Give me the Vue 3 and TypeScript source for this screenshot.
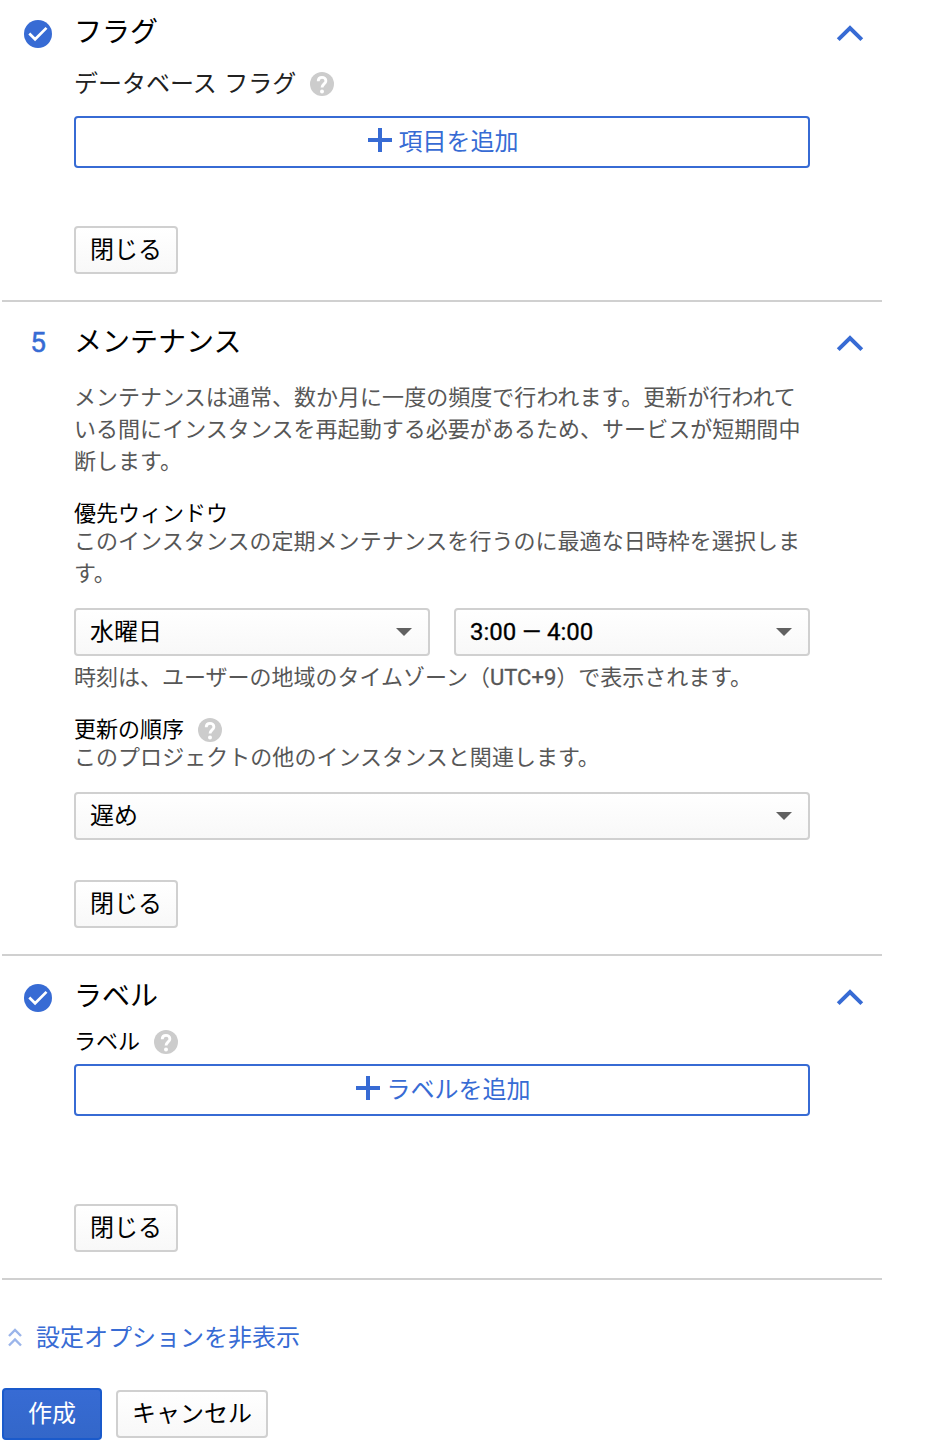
<script setup lang="ts">
import { ref } from 'vue'

const day = ref<string>('水曜日')
const time = ref<string>('3:00 — 4:00')
const order = ref<string>('遅め')
</script>

<template>
  <svg class="defs" aria-hidden="true">
    <symbol id="check" viewBox="0 0 28 28">
      <circle cx="14" cy="14" r="14" fill="#376bd4" />
      <path d="M5.3 13.5 11.1 19.3 22.5 7.9" fill="none" stroke="#fff" stroke-width="2.7" />
    </symbol>
    <symbol id="chevron" viewBox="0 0 28 18">
      <path d="M2.2 14.6 14 3 25.8 14.6" fill="none" stroke="#376bd4" stroke-width="4" />
    </symbol>
    <symbol id="help" viewBox="0 0 24 24">
      <circle cx="12" cy="12" r="12" fill="#ccc" />
      <path
        d="M8.2 9.3C8.2 6.8 9.8 5.4 12 5.4s3.9 1.4 3.9 3.5c0 2.8-3.9 3.2-3.9 6.6"
        fill="none"
        stroke="#fff"
        stroke-width="2.8"
      />
      <circle cx="12" cy="19.4" r="2" fill="#fff" />
    </symbol>
    <symbol id="plus" viewBox="0 0 24 24">
      <path d="M10 0h4v10h10v4H14v10h-4V14H0v-4h10z" fill="#376bd4" />
    </symbol>
  </svg>

  <main class="form">
    <section class="section first">
      <header class="head">
        <span class="step"><svg class="check"><use href="#check" /></svg></span>
        <h2 class="title">フラグ</h2>
        <svg class="chevron"><use href="#chevron" /></svg>
      </header>
      <div class="body">
        <div class="label-row flags-label">
          <span>データベース フラグ</span>
          <svg class="help"><use href="#help" /></svg>
        </div>
        <button class="add add-flag">
          <svg class="plus"><use href="#plus" /></svg><span>項目を追加</span>
        </button>
        <button class="btn close-flags"><span>閉じる</span></button>
      </div>
    </section>

    <section class="section">
      <header class="head">
        <span class="step number">5</span>
        <h2 class="title">メンテナンス</h2>
        <svg class="chevron"><use href="#chevron" /></svg>
      </header>
      <div class="body">
        <p class="text intro">メンテナンスは通常、数か月に一度の頻度で行われます。更新が行われて<br />いる間にインスタンスを再起動する必要があるため、サービスが短期間中<br />断します。</p>
        <h3 class="sub">優先ウィンドウ</h3>
        <p class="text">このインスタンスの定期メンテナンスを行うのに最適な日時枠を選択しま<br />す。</p>
        <div class="selects">
          <div class="select"><span>{{ day }}</span><i class="caret"></i></div>
          <div class="select"><span class="time">{{ time }}</span><i class="caret"></i></div>
        </div>
        <p class="text note">時刻は、ユーザーの地域のタイムゾーン（<span class="latin">UTC+9</span>）で表示されます。</p>
        <h3 class="sub">更新の順序<svg class="help"><use href="#help" /></svg></h3>
        <p class="text">このプロジェクトの他のインスタンスと関連します。</p>
        <div class="selects">
          <div class="select"><span>{{ order }}</span><i class="caret"></i></div>
        </div>
        <button class="btn close-maintenance"><span>閉じる</span></button>
      </div>
    </section>

    <section class="section">
      <header class="head">
        <span class="step"><svg class="check"><use href="#check" /></svg></span>
        <h2 class="title">ラベル</h2>
        <svg class="chevron"><use href="#chevron" /></svg>
      </header>
      <div class="body">
        <div class="label-row labels-label">
          <span>ラベル</span>
          <svg class="help"><use href="#help" /></svg>
        </div>
        <button class="add add-label">
          <svg class="plus"><use href="#plus" /></svg><span>ラベルを追加</span>
        </button>
        <button class="btn close-labels"><span>閉じる</span></button>
      </div>
    </section>

    <a class="toggle">
      <svg class="double" viewBox="0 0 14 20">
        <path d="M1 9 7 3l6 6M1 18.5l6-6 6 6" fill="none" stroke="#9bb5ea" stroke-width="2.4" />
      </svg>
      <span>設定オプションを非表示</span>
    </a>

    <div class="actions">
      <button class="btn primary"><span>作成</span></button>
      <button class="btn cancel"><span>キャンセル</span></button>
    </div>
  </main>
</template>

<style>
body {
  margin: 0;
  background: #fff;
}
</style>

<style scoped>
.defs {
  display: none;
}
.form {
  width: 880px;
  padding-left: 2px;
  font-family: Roboto, 'Noto Sans CJK JP', sans-serif;
  font-size: 24px;
  line-height: 32px;
  color: #000;
}
svg {
  display: block;
  flex: none;
}
.section {
  padding: 20px 0 26px;
  border-bottom: 2px solid #d0d0d0;
}
.first {
  padding-top: 12px;
}
.head {
  display: flex;
  align-items: center;
  height: 44px;
}
.step {
  display: flex;
  justify-content: center;
  width: 72px;
  font-size: 28px;
  color: #376bd4;
}
.number {
  padding-bottom: 2px;
  -webkit-text-stroke: 0.5px #376bd4;
}
.check {
  width: 28px;
  height: 28px;
}
.title {
  flex: 1;
  margin: 0;
  padding-bottom: 2px;
  font-size: 28px;
  font-weight: 400;
  line-height: 38px;
}
.chevron {
  width: 28px;
  height: 18px;
  margin-right: 18px;
}
.body {
  width: 736px;
  padding-left: 72px;
}
.label-row {
  display: flex;
  align-items: center;
  gap: 14px;
  height: 32px;
}
.flags-label {
  margin-top: 12px;
  color: #212121;
  word-spacing: 1.5px;
}
.labels-label {
  margin-top: 6px;
  font-size: 22px;
}
.help {
  width: 24px;
  height: 24px;
}
.add {
  display: flex;
  box-sizing: border-box;
  align-items: center;
  justify-content: center;
  gap: 7px;
  width: 736px;
  height: 52px;
  padding: 0 0 0 2px;
  border: 2px solid #376bd4;
  border-radius: 4px;
  background: #fff;
  color: #376bd4;
  font: inherit;
}
.add-flag {
  margin-top: 16px;
}
.add-label {
  margin-top: 6px;
}
.plus {
  width: 24px;
  height: 24px;
  margin-bottom: 4px;
}
.btn {
  display: flex;
  box-sizing: border-box;
  align-items: center;
  justify-content: center;
  width: 104px;
  height: 48px;
  padding: 0;
  border: 2px solid #d0d0d0;
  border-radius: 4px;
  background: linear-gradient(#fff, #f8f8f8);
  color: #000;
  font: inherit;
}
.close-flags {
  margin-top: 58px;
}
.close-maintenance {
  margin-top: 40px;
}
.close-labels {
  margin-top: 88px;
}
.text {
  margin: 0;
  font-size: 22px;
  line-height: 32px;
  letter-spacing: 0.04px;
  color: #575757;
  white-space: nowrap;
}
.intro {
  margin-top: 16px;
}
.sub {
  display: flex;
  align-items: center;
  gap: 14px;
  margin: 22px 0 0;
  padding-top: 2px;
  font-size: 22px;
  font-weight: 400;
  line-height: 24px;
}
.selects {
  display: flex;
  gap: 24px;
  margin-top: 18px;
}
.select {
  display: flex;
  box-sizing: border-box;
  flex: 1;
  align-items: center;
  justify-content: space-between;
  height: 48px;
  padding: 0 16px 0 14px;
  border: 2px solid #d0d0d0;
  border-radius: 4px;
  background: linear-gradient(#fff, #f8f8f8);
}
.time {
  -webkit-text-stroke: 0.3px #000;
}
.latin {
  -webkit-text-stroke: 0.3px #575757;
}
.caret {
  border: 8px solid transparent;
  border-top-color: #616161;
  border-bottom: 0;
}
.note {
  margin-top: 6px;
  letter-spacing: 0;
}
.toggle {
  display: flex;
  align-items: center;
  gap: 14px;
  height: 34px;
  margin-top: 40px;
  padding-left: 6px;
  color: #376bd4;
}
.toggle span {
  padding-top: 2px;
}
.double {
  width: 14px;
  height: 20px;
}
.actions {
  display: flex;
  align-items: center;
  gap: 14px;
  margin-top: 34px;
}
.primary {
  width: 100px;
  height: 52px;
  border-color: #1a5acb;
  background: linear-gradient(#376bd4, #3367c9);
  color: #fff;
}
.cancel {
  width: 152px;
}
</style>
